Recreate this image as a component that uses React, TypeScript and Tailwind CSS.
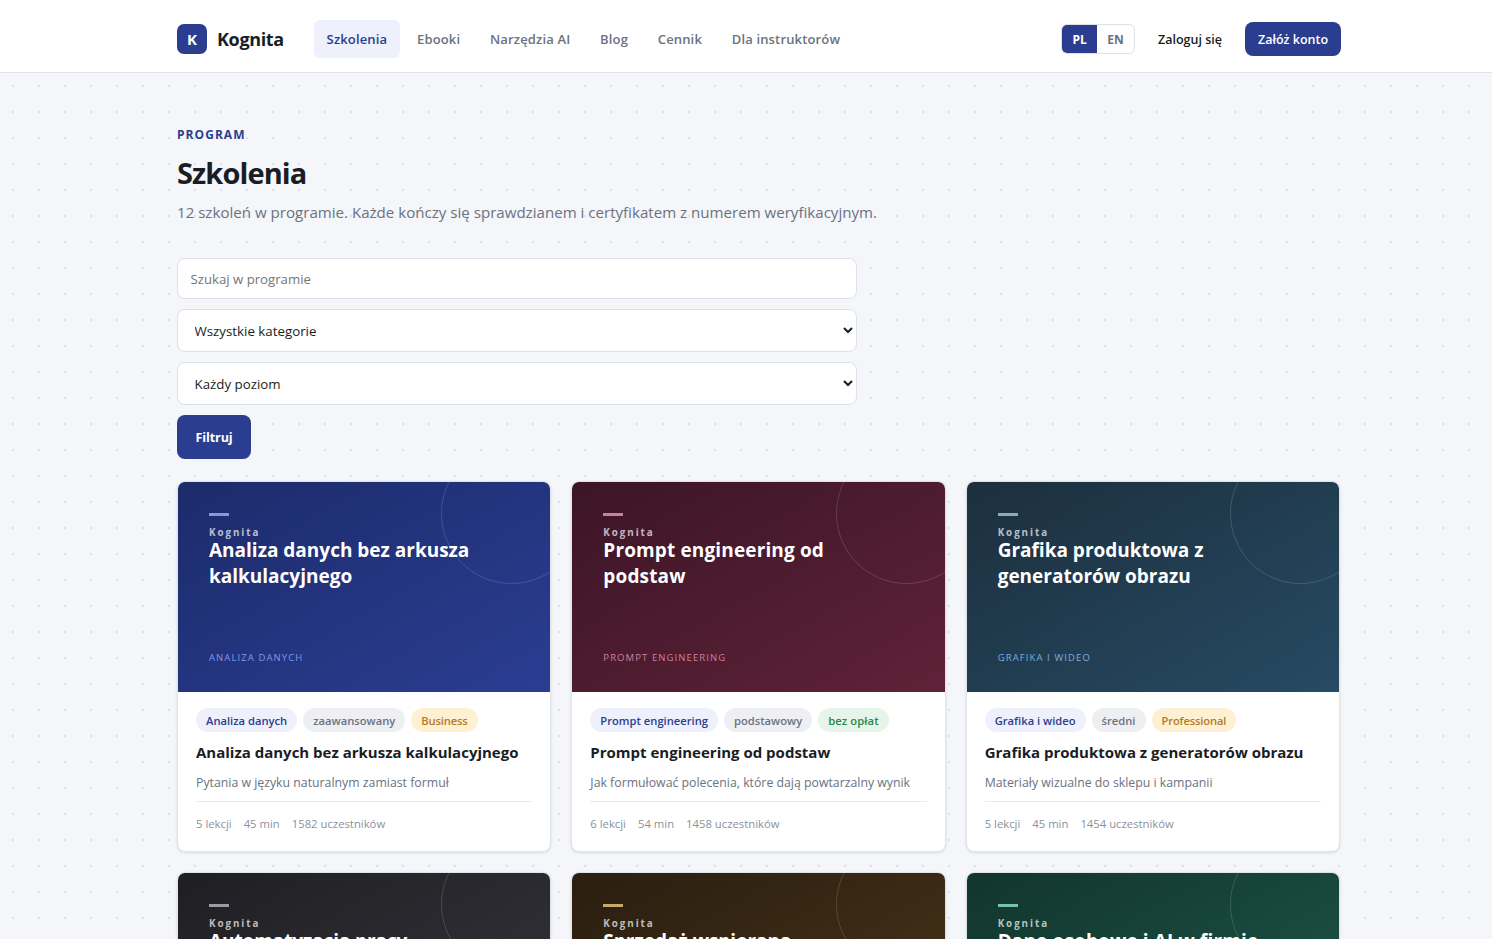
import { useState } from 'react'
import clsx from 'clsx'

type Tag = { label: string; tone: 'category' | 'level' | 'paid' | 'free' }

type Course = {
  title: string
  category: string
  cover: string
  bar: string
  accent: string
  details?: {
    tags: Tag[]
    lead: string
    meta: string[]
  }
}

const NAV = ['Szkolenia', 'Ebooki', 'Narzędzia AI', 'Blog', 'Cennik', 'Dla instruktorów']

const TONES = {
  category: 'bg-[#eef0fc] text-[#2b3d8f]',
  level: 'bg-[#eeeff3] text-[#6b7280]',
  paid: 'bg-[#fef1d3] text-[#b7791f] tracking-[-0.15px]',
  free: 'bg-[#e6f4ea] text-[#1f8a4c] tracking-[0.12px]',
}

const COURSES: Course[] = [
  {
    title: 'Analiza danych bez arkusza kalkulacyjnego',
    category: 'Analiza danych',
    cover: 'from-[#1c2b6b] to-[#2b3d92]',
    bar: 'bg-[#8b95d8]',
    accent: 'text-[#8794e6]',
    details: {
      tags: [
        { label: 'Analiza danych', tone: 'category' },
        { label: 'zaawansowany', tone: 'level' },
        { label: 'Business', tone: 'paid' },
      ],
      lead: 'Pytania w języku naturalnym zamiast formuł',
      meta: ['5 lekcji', '45 min', '1582 uczestników'],
    },
  },
  {
    title: 'Prompt engineering od podstaw',
    category: 'Prompt engineering',
    cover: 'from-[#3b1526] to-[#602238] tracking-[0.14px]',
    bar: 'bg-[#c9829c]',
    accent: 'text-[#cf7f9c]',
    details: {
      tags: [
        { label: 'Prompt engineering', tone: 'category' },
        { label: 'podstawowy', tone: 'level' },
        { label: 'bez opłat', tone: 'free' },
      ],
      lead: 'Jak formułować polecenia, które dają powtarzalny wynik',
      meta: ['6 lekcji', '54 min', '1458 uczestników'],
    },
  },
  {
    title: 'Grafika produktowa z generatorów obrazu',
    category: 'Grafika i wideo',
    cover: 'from-[#1c2f3d] to-[#264b64]',
    bar: 'bg-[#86acc6]',
    accent: 'text-[#7caeda]',
    details: {
      tags: [
        { label: 'Grafika i wideo', tone: 'category' },
        { label: 'średni', tone: 'level' },
        { label: 'Professional', tone: 'paid' },
      ],
      lead: 'Materiały wizualne do sklepu i kampanii',
      meta: ['5 lekcji', '45 min', '1454 uczestników'],
    },
  },
  {
    title: 'Automatyzacja pracy',
    category: 'Automatyzacja',
    cover: 'from-[#1f1f23] to-[#35353d] tracking-[-0.1px]',
    bar: 'bg-[#9a9ba8]',
    accent: 'text-[#9a9ba8]',
  },
  {
    title: 'Sprzedaż wspierana',
    category: 'Sprzedaż',
    cover: 'from-[#2a1e10] to-[#4a3519]',
    bar: 'bg-[#c9a96c]',
    accent: 'text-[#c9a96c]',
  },
  {
    title: 'Dane osobowe i AI w firmie',
    category: 'Prawo',
    cover: 'from-[#12352d] to-[#1d5948] tracking-[0.14px]',
    bar: 'bg-[#78c2a8]',
    accent: 'text-[#78c2a8]',
  },
]

function Header() {
  const [lang, setLang] = useState('PL')

  return (
    <header className="h-[73px] bg-white border-b border-[#dde1e8]">
      <div className="ml-[177px] w-[1164px] h-[72px] pt-1.5 flex items-center">
        <a href="#" className="w-[107px] mr-[30px] -mt-1.5 flex items-center gap-2.5">
          <span className="w-[30px] h-[30px] mt-1.5 rounded-[7px] bg-[#2b3d8f] text-white text-[15px] font-bold flex items-center justify-center">
            K
          </span>
          <span className="mt-1.5 text-[18px] font-bold tracking-[-0.35px] text-[#1a1d24]">Kognita</span>
        </a>
        <nav className="flex gap-[4.6px]">
          {NAV.map((item, i) => (
            <a key={item} href="#"
              className={clsx(
                'h-[38px] px-[12.6px] pt-0.5 rounded-md flex items-center text-[13px] font-semibold tracking-[0.15px]',
                i === 0 ? 'bg-[#eef0fc] text-[#2b3d8f]' : 'text-[#6b7280]'
              )}>
              {item}
            </a>
          ))}
        </nav>
        <div className="ml-auto flex items-center">
          <div className="w-[74px] h-[30px] rounded-md border border-[#dde1e8] overflow-hidden flex text-[12px] font-bold">
            {['PL', 'EN'].map(code => (
              <button key={code} type="button" onClick={() => setLang(code)}
                className={clsx('pt-0.5', lang === code ? 'bg-[#2b3d8f] text-white' : 'text-[#6b7280]', code === 'PL' ? 'w-[35px]' : 'w-[37px]')}>
                {code}
              </button>
            ))}
          </div>
          <a href="#" className="ml-[23px] pt-0.5 text-[12.5px] font-semibold text-[#1a1d24]">Zaloguj się</a>
          <a href="#" className="ml-[23px] w-24 h-[34px] pt-0.5 rounded-lg bg-[#2b3d8f] text-white text-[12.5px] font-semibold flex items-center justify-center">
            Załóż konto
          </a>
        </div>
      </div>
    </header>
  )
}

function Filters() {
  const [query, setQuery] = useState('')

  return (
    <form onSubmit={e => e.preventDefault()} className="w-[680px] flex flex-col items-start gap-2.5">
      <input
        type="text"
        value={query}
        onChange={e => setQuery(e.target.value)}
        placeholder="Szukaj w programie"
        className="w-full h-[41px] px-[12.5px] rounded-lg bg-white border border-[#dde1e8] text-[13.2px] text-[#1a1d24] placeholder-[#757575]"
      />
      <select className="w-full h-[43px] pl-[12.5px] rounded-lg bg-white border border-[#dde1e8] text-[13.3px] text-[#1a1d24]">
        <option>Wszystkie kategorie</option>
      </select>
      <select className="w-full h-[43px] pl-[12.5px] rounded-lg bg-white border border-[#dde1e8] text-[13.3px] text-[#1a1d24]">
        <option>Każdy poziom</option>
      </select>
      <button type="submit" className="w-[74px] h-11 pt-0.5 rounded-lg bg-[#2b3d8f] text-white text-[12.6px] font-bold tracking-[-0.1px]">
        Filtruj
      </button>
    </form>
  )
}

function CourseCard({ course }: { course: Course }) {
  const { details } = course

  return (
    <article className="h-[371px] rounded-lg bg-white border border-[#dfe3ea] shadow-[0_1px_3px_rgba(26,29,36,0.12)] overflow-hidden">
      <div className={clsx('relative h-[210px] px-[31px] pt-[31px] pb-[26px] overflow-hidden flex flex-col bg-linear-to-br', course.cover)}>
        <span className="absolute -top-[39px] -right-[32px] w-[141px] h-[141px] rounded-full border border-white/15" />
        <span className={clsx('w-5 h-[2.5px] shrink-0', course.bar)} />
        <span className="mt-[10.5px] h-[11px] leading-[13px] text-[9.8px] font-bold tracking-[1.95px] text-white/70">Kognita</span>
        <h2 className="w-[280px] text-[19px] leading-[26px] font-bold text-white">{course.title}</h2>
        <span className={clsx('mt-auto text-[9.5px] leading-4 font-medium tracking-[1.1px] uppercase', course.accent)}>
          {course.category}
        </span>
      </div>
      {details && (
        <div className="px-[18px] pt-4">
          <div className="flex gap-1.5">
            {details.tags.map(tag => (
              <span key={tag.label}
                className={clsx('h-6 px-2.5 pt-0.5 rounded-full flex items-center text-[11.2px] font-semibold', TONES[tag.tone])}>
                {tag.label}
              </span>
            ))}
          </div>
          <h3 className="mt-2.5 text-[15px] leading-[21px] font-bold whitespace-nowrap text-[#1a1d24]">{course.title}</h3>
          <p className="mt-2.5 text-[12.3px] leading-5 whitespace-nowrap text-[#6b7280]">{details.lead}</p>
          <div className="mt-2 pt-[13px] border-t border-[#e8eaef] flex gap-3 text-[11.3px] leading-[18px] text-[#8b919d]">
            {details.meta.map(m => <span key={m}>{m}</span>)}
          </div>
        </div>
      )}
    </article>
  )
}

export default function App() {
  return (
    <div className="h-screen overflow-hidden bg-[#f4f6fa] font-['Open_Sans','Noto_Sans',sans-serif]">
      <Header />
      <main className="h-full bg-[radial-gradient(#dcdfea_1px,transparent_1px)] bg-size-[26px_26px]">
        <div className="ml-[177px] w-[1163px] pt-[54px]">
          <p className="text-[12px] leading-4 font-bold tracking-[1.05px] uppercase text-[#2b3d8f]">Program</p>
          <h1 className="mt-2.5 text-[29px] leading-10 font-bold tracking-[-0.9px] text-[#1a1d24]">Szkolenia</h1>
          <p className="mt-[7px] mb-[34px] text-[15.1px] leading-6 text-[#6b7280]">
            12 szkoleń w programie. Każde kończy się sprawdzianem i certyfikatem z numerem weryfikacyjnym.
          </p>
          <Filters />
          <div className="mt-[22px] grid grid-cols-3 gap-5">
            {COURSES.map(course => <CourseCard key={course.title} course={course} />)}
          </div>
        </div>
      </main>
    </div>
  )
}
